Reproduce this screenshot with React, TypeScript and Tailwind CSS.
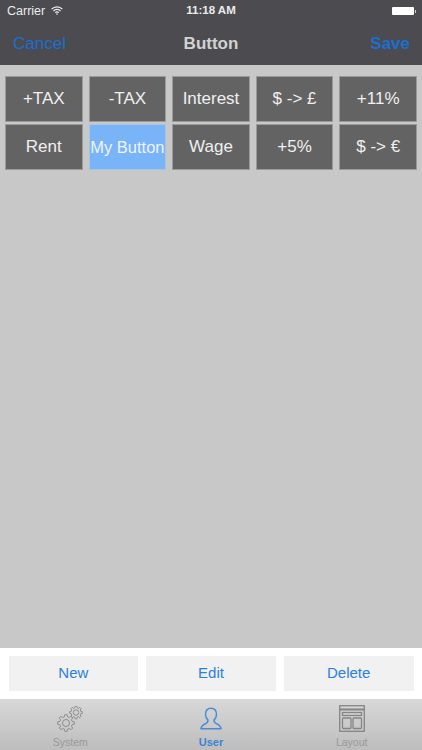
import React from "react";

const cells = ["+TAX", "-TAX", "Interest", "$ -> £", "+11%", "Rent", "My Button", "Wage", "+5%", "$ -> €"];

function Gear({ x, y, r }: { x: number; y: number; r: number }) {
  const n = 8;
  const pts: string[] = [];
  const root = r * 0.76;
  for (let i = 0; i < n; i++) {
    const a = (i * 2 * Math.PI) / n;
    const w = Math.PI / n;
    const list: [number, number][] = [
      [root, a - w * 0.62],
      [r, a - w * 0.36],
      [r, a + w * 0.36],
      [root, a + w * 0.62],
    ];
    for (const [rad, t] of list) {
      pts.push(`${(rad * Math.cos(t)).toFixed(2)},${(rad * Math.sin(t)).toFixed(2)}`);
    }
  }
  return (
    <g transform={`translate(${x} ${y})`} fill="none" stroke="#8e8e8e" strokeWidth="1">
      <polygon points={pts.join(" ")} strokeLinejoin="round" />
      <circle r={r * 0.42} />
    </g>
  );
}

export default function App() {
  return (
    <div className="w-[422px] h-[750px] flex flex-col overflow-hidden bg-[#c8c8c8] font-['Liberation_Sans',sans-serif]">
      <header className="h-[65px] shrink-0 bg-[#4b4b50] flex flex-col">
        <div className="h-[22px] flex items-center pl-[7px] pr-[6px] text-[#ececec] text-[12.5px] relative">
          <span>Carrier</span>
          <svg className="ml-[6px] mb-[1px]" width="12" height="9" viewBox="0 0 12 9" fill="none" stroke="#f0f0f0" strokeWidth="1.2">
            <path d="M0.6 3.2 A7.4 7.4 0 0 1 11.4 3.2" />
            <path d="M2.5 5 A4.7 4.7 0 0 1 9.5 5" />
            <path d="M4.3 6.7 A2.2 2.2 0 0 1 7.7 6.7" />
            <circle cx="6" cy="8" r="0.8" fill="#f0f0f0" stroke="none" />
          </svg>
          <span className="absolute left-0 right-0 text-center font-bold text-[11.5px] text-[#ececec]">11:18 AM</span>
          <div className="ml-auto flex items-center gap-[1px]">
            <div className="w-[22px] h-[8px] bg-white rounded-[1px]" />
            <div className="w-[1.5px] h-[3px] bg-[#cfcfcf]" />
          </div>
        </div>
        <div className="flex-1 flex items-center justify-between pl-[13px] pr-[12px] text-[17px] relative">
          <span className="text-[#1a6fd0]">Cancel</span>
          <span className="absolute left-0 right-0 text-center font-bold text-[#d2d2d2]">Button</span>
          <span className="font-bold text-[#1a6fd0]">Save</span>
        </div>
      </header>

      <main className="flex-1 pt-[11px] px-[5px]">
        <div className="grid grid-cols-5 gap-x-[6px] gap-y-[2px]">
          {cells.map((c) => (
            <div
              key={c}
              className={
                c === "My Button"
                  ? "h-[46px] flex items-center justify-center bg-[#79b3f8] text-[#eef5fd] text-[16.5px] whitespace-nowrap border border-[#a9c4e2]"
                  : "h-[46px] flex items-center justify-center bg-[#636363] text-[#f0f0f0] text-[17px] whitespace-nowrap border border-[#9a9a9a]"
              }
            >
              {c}
            </div>
          ))}
        </div>
      </main>

      <section className="h-[51px] shrink-0 bg-white px-[8.5px] pt-[8px] flex gap-[8px]">
        {["New", "Edit", "Delete"].map((b) => (
          <div key={b} className="flex-1 h-[35px] bg-[#f1f1f1] flex items-center justify-center text-[15px] text-[#2a80e0]">
            {b}
          </div>
        ))}
      </section>

      <nav className="h-[51px] shrink-0 bg-gradient-to-b from-[#d8d8d8] to-[#bdbdbd] grid grid-cols-3">
        <div className="flex flex-col items-center justify-between pt-[7px] pb-[1px]">
          <svg width="26" height="26" viewBox="0 0 26 26">
            <Gear x={9} y={17} r={8.4} />
            <Gear x={19} y={6.5} r={6.4} />
          </svg>
          <span className="text-[10.5px] leading-[13px] text-[#999999]">System</span>
        </div>
        <div className="flex flex-col items-center justify-between pt-[8px] pb-[1px]">
          <svg width="22" height="23" viewBox="0 0 24 25" fill="none" stroke="#4a8ad8" strokeWidth="1.6">
            <path d="M12 1.2 C7.6 1.2 6 4.6 6 8 C6 10.8 7.2 12.6 8.6 14 C9 15.8 8.2 17 6.2 18 C3.6 19.2 1.6 20 1 23.6 H23 C22.4 20 20.4 19.2 17.8 18 C15.8 17 15 15.8 15.4 14 C16.8 12.6 18 10.8 18 8 C18 4.6 16.4 1.2 12 1.2 Z" strokeLinejoin="round" />
          </svg>
          <span className="text-[11px] leading-[13px] font-bold text-[#3d83d6]">User</span>
        </div>
        <div className="flex flex-col items-center justify-between pt-[6px] pb-[1px]">
          <svg width="26" height="27" viewBox="0 0 26 27" fill="none" stroke="#858585" strokeWidth="1.3">
            <rect x="0.7" y="0.7" width="24.6" height="25.6" />
            <line x1="1" y1="4.5" x2="25" y2="4.5" strokeWidth="2" />
            <rect x="3.5" y="7.5" width="19" height="3" />
            <rect x="3.5" y="13" width="8.5" height="10.5" rx="1" />
            <rect x="14" y="13" width="8.5" height="10.5" rx="1" />
          </svg>
          <span className="text-[10.5px] leading-[13px] text-[#999999]">Layout</span>
        </div>
      </nav>
    </div>
  );
}
